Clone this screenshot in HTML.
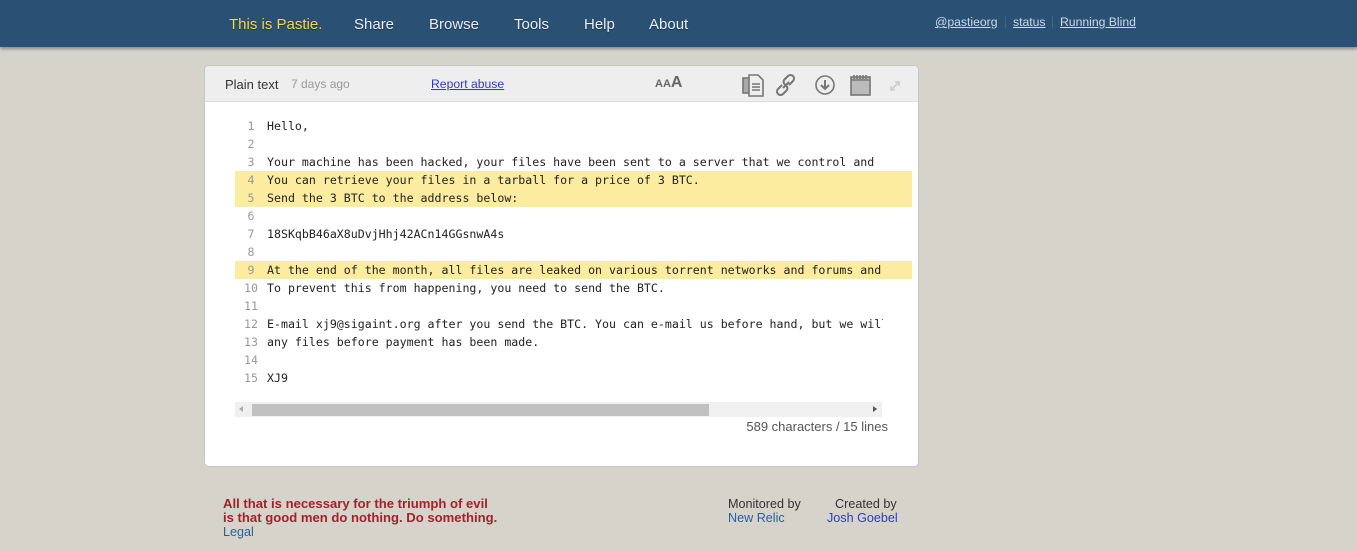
<!DOCTYPE html>
<html><head><meta charset="utf-8"><style>
*{margin:0;padding:0;box-sizing:border-box}
body{width:1357px;height:551px;background:#d6d3cb;font-family:"Liberation Sans",Arial,sans-serif;position:relative;overflow:hidden}
.hdr{position:absolute;left:0;top:0;width:1357px;height:47px;background:#2a5174;box-shadow:0 2px 3px rgba(0,0,0,.35)}
.hdr span{position:absolute;top:16px;font-size:15px;color:#e8eef3;text-shadow:0 1px 1px rgba(0,0,0,.4)}
.rl{position:absolute;top:15px;font-size:12.2px;color:#c9dbe9;text-decoration:underline}
.sep{position:absolute;top:16px;width:1px;height:12px;background:#3f6585}
.box{position:absolute;left:204px;top:65px;width:715px;height:402px;background:#fff;border:1px solid #c8c6c0;border-radius:5px;overflow:hidden}
.bar{position:absolute;left:0;top:0;width:100%;height:36px;background:#eee;border-bottom:1px solid #ddd}
.code{position:absolute;left:30px;top:51px;width:677px;font-family:"DejaVu Sans Mono",monospace;font-size:11.6px;color:#222}
.ln{height:18px;line-height:18px;white-space:pre;overflow:hidden;position:relative}
.ln b{font-weight:normal;display:inline-block;width:32px;text-align:center;color:#999;vertical-align:top}
.ln i{font-style:normal;display:inline-block;width:616px;overflow:hidden;vertical-align:top}
.hl{background:#fcec9f}
.foot{position:absolute;font-size:12.6px}
a{color:#2b3ad0}
</style></head><body>
<div class="hdr">
<span style="left:229px;color:#f6d93a">This is Pastie.</span>
<span style="left:354px">Share</span>
<span style="left:429px">Browse</span>
<span style="left:514px">Tools</span>
<span style="left:584px">Help</span>
<span style="left:649px">About</span>
<div class="rl" style="left:935px">@pastieorg</div><div class="sep" style="left:1005px"></div>
<div class="rl" style="left:1013px">status</div><div class="sep" style="left:1052px"></div>
<div class="rl" style="left:1060px">Running Blind</div>
</div>
<div class="box">
<div class="bar">
<div style="position:absolute;left:20px;top:11px;font-size:13px;color:#333">Plain text</div>
<div style="position:absolute;left:86px;top:11px;font-size:12px;color:#999">7 days ago</div>
<div style="position:absolute;left:226px;top:11px;font-size:12.2px;color:#2b3ad0;text-decoration:underline">Report abuse</div>
<div style="position:absolute;left:450px;top:8px;color:#666;font-weight:bold"><span style="font-size:11px">AA</span><span style="font-size:16px">A</span></div>
<svg style="position:absolute;left:536px;top:6px" width="160" height="26" viewBox="0 0 160 26" fill="none" stroke="#777" stroke-width="1.6">
<rect x="2" y="6" width="10" height="15" fill="#aaa" stroke="#777"/><path d="M8 3h9l5 5v16H8z" fill="#eee"/><path d="M11 12h8M11 15h8M11 18h8"/>
<path d="M41 13l-4 4a3.5 3.5 0 0 0 5 5l4-4a3.5 3.5 0 0 0-2-5M48 13l4-4a3.5 3.5 0 0 0-5-5l-4 4a3.5 3.5 0 0 0 2 5M42 16l6-6" stroke-width="2"/>
<circle cx="84" cy="13" r="9"/><path d="M84 8v9M80 13l4 4 4-4" stroke-width="2"/>
<rect x="110" y="5" width="19" height="18" fill="#bbb"/><path d="M113 3v4M116 3v4M119 3v4M122 3v4M125 3v4M110 8h19"/>
<path d="M150 18l8-8M154 10h4v4M150 14v4h4" stroke="#ccc"/>
</svg>
</div>
<div class="code">
<div class="ln"><b>1</b><i>Hello,</i></div>
<div class="ln"><b>2</b></div>
<div class="ln"><b>3</b><i>Your machine has been hacked, your files have been sent to a server that we control and</i></div>
<div class="ln hl"><b>4</b><i>You can retrieve your files in a tarball for a price of 3 BTC.</i></div>
<div class="ln hl"><b>5</b><i>Send the 3 BTC to the address below:</i></div>
<div class="ln"><b>6</b></div>
<div class="ln"><b>7</b><i>18SKqbB46aX8uDvjHhj42ACn14GGsnwA4s</i></div>
<div class="ln"><b>8</b></div>
<div class="ln hl"><b>9</b><i>At the end of the month, all files are leaked on various torrent networks and forums and</i></div>
<div class="ln"><b>10</b><i>To prevent this from happening, you need to send the BTC.</i></div>
<div class="ln"><b>11</b></div>
<div class="ln"><b>12</b><i>E-mail xj9@sigaint.org after you send the BTC. You can e-mail us before hand, but we will</i></div>
<div class="ln"><b>13</b><i>any files before payment has been made.</i></div>
<div class="ln"><b>14</b></div>
<div class="ln"><b>15</b><i>XJ9</i></div>
</div>
<div style="position:absolute;left:30px;top:336px;width:647px;height:15px;background:#f0f0f0">
<div style="position:absolute;left:17px;top:2px;width:457px;height:12px;background:#c1c1c1"></div>
<div style="position:absolute;left:4px;top:4px;border:3px solid transparent;border-right:4px solid #aaa;border-left:0"></div>
<div style="position:absolute;right:5px;top:4px;border:3px solid transparent;border-left:4px solid #555;border-right:0"></div>
</div>
<div style="position:absolute;right:30px;top:353px;font-size:13px;color:#555">589 characters / 15 lines</div>
</div>
<div class="foot" style="left:223px;top:497px;color:#a3222a;font-weight:bold;line-height:14px;font-size:13.1px">All that is necessary for the triumph of evil<br>is that good men do nothing. Do something.<br><a style="font-weight:normal;color:#2b5fa0;font-size:12.6px">Legal</a></div>
<div class="foot" style="left:728px;top:497px;color:#333;line-height:14px">Monitored by<br><a style="color:#2b5fa0">New Relic</a></div>
<div class="foot" style="left:827px;top:497px;color:#333;line-height:14px;text-align:center">&nbsp;&nbsp;Created by<br><a>Josh Goebel</a></div>
</body></html>
